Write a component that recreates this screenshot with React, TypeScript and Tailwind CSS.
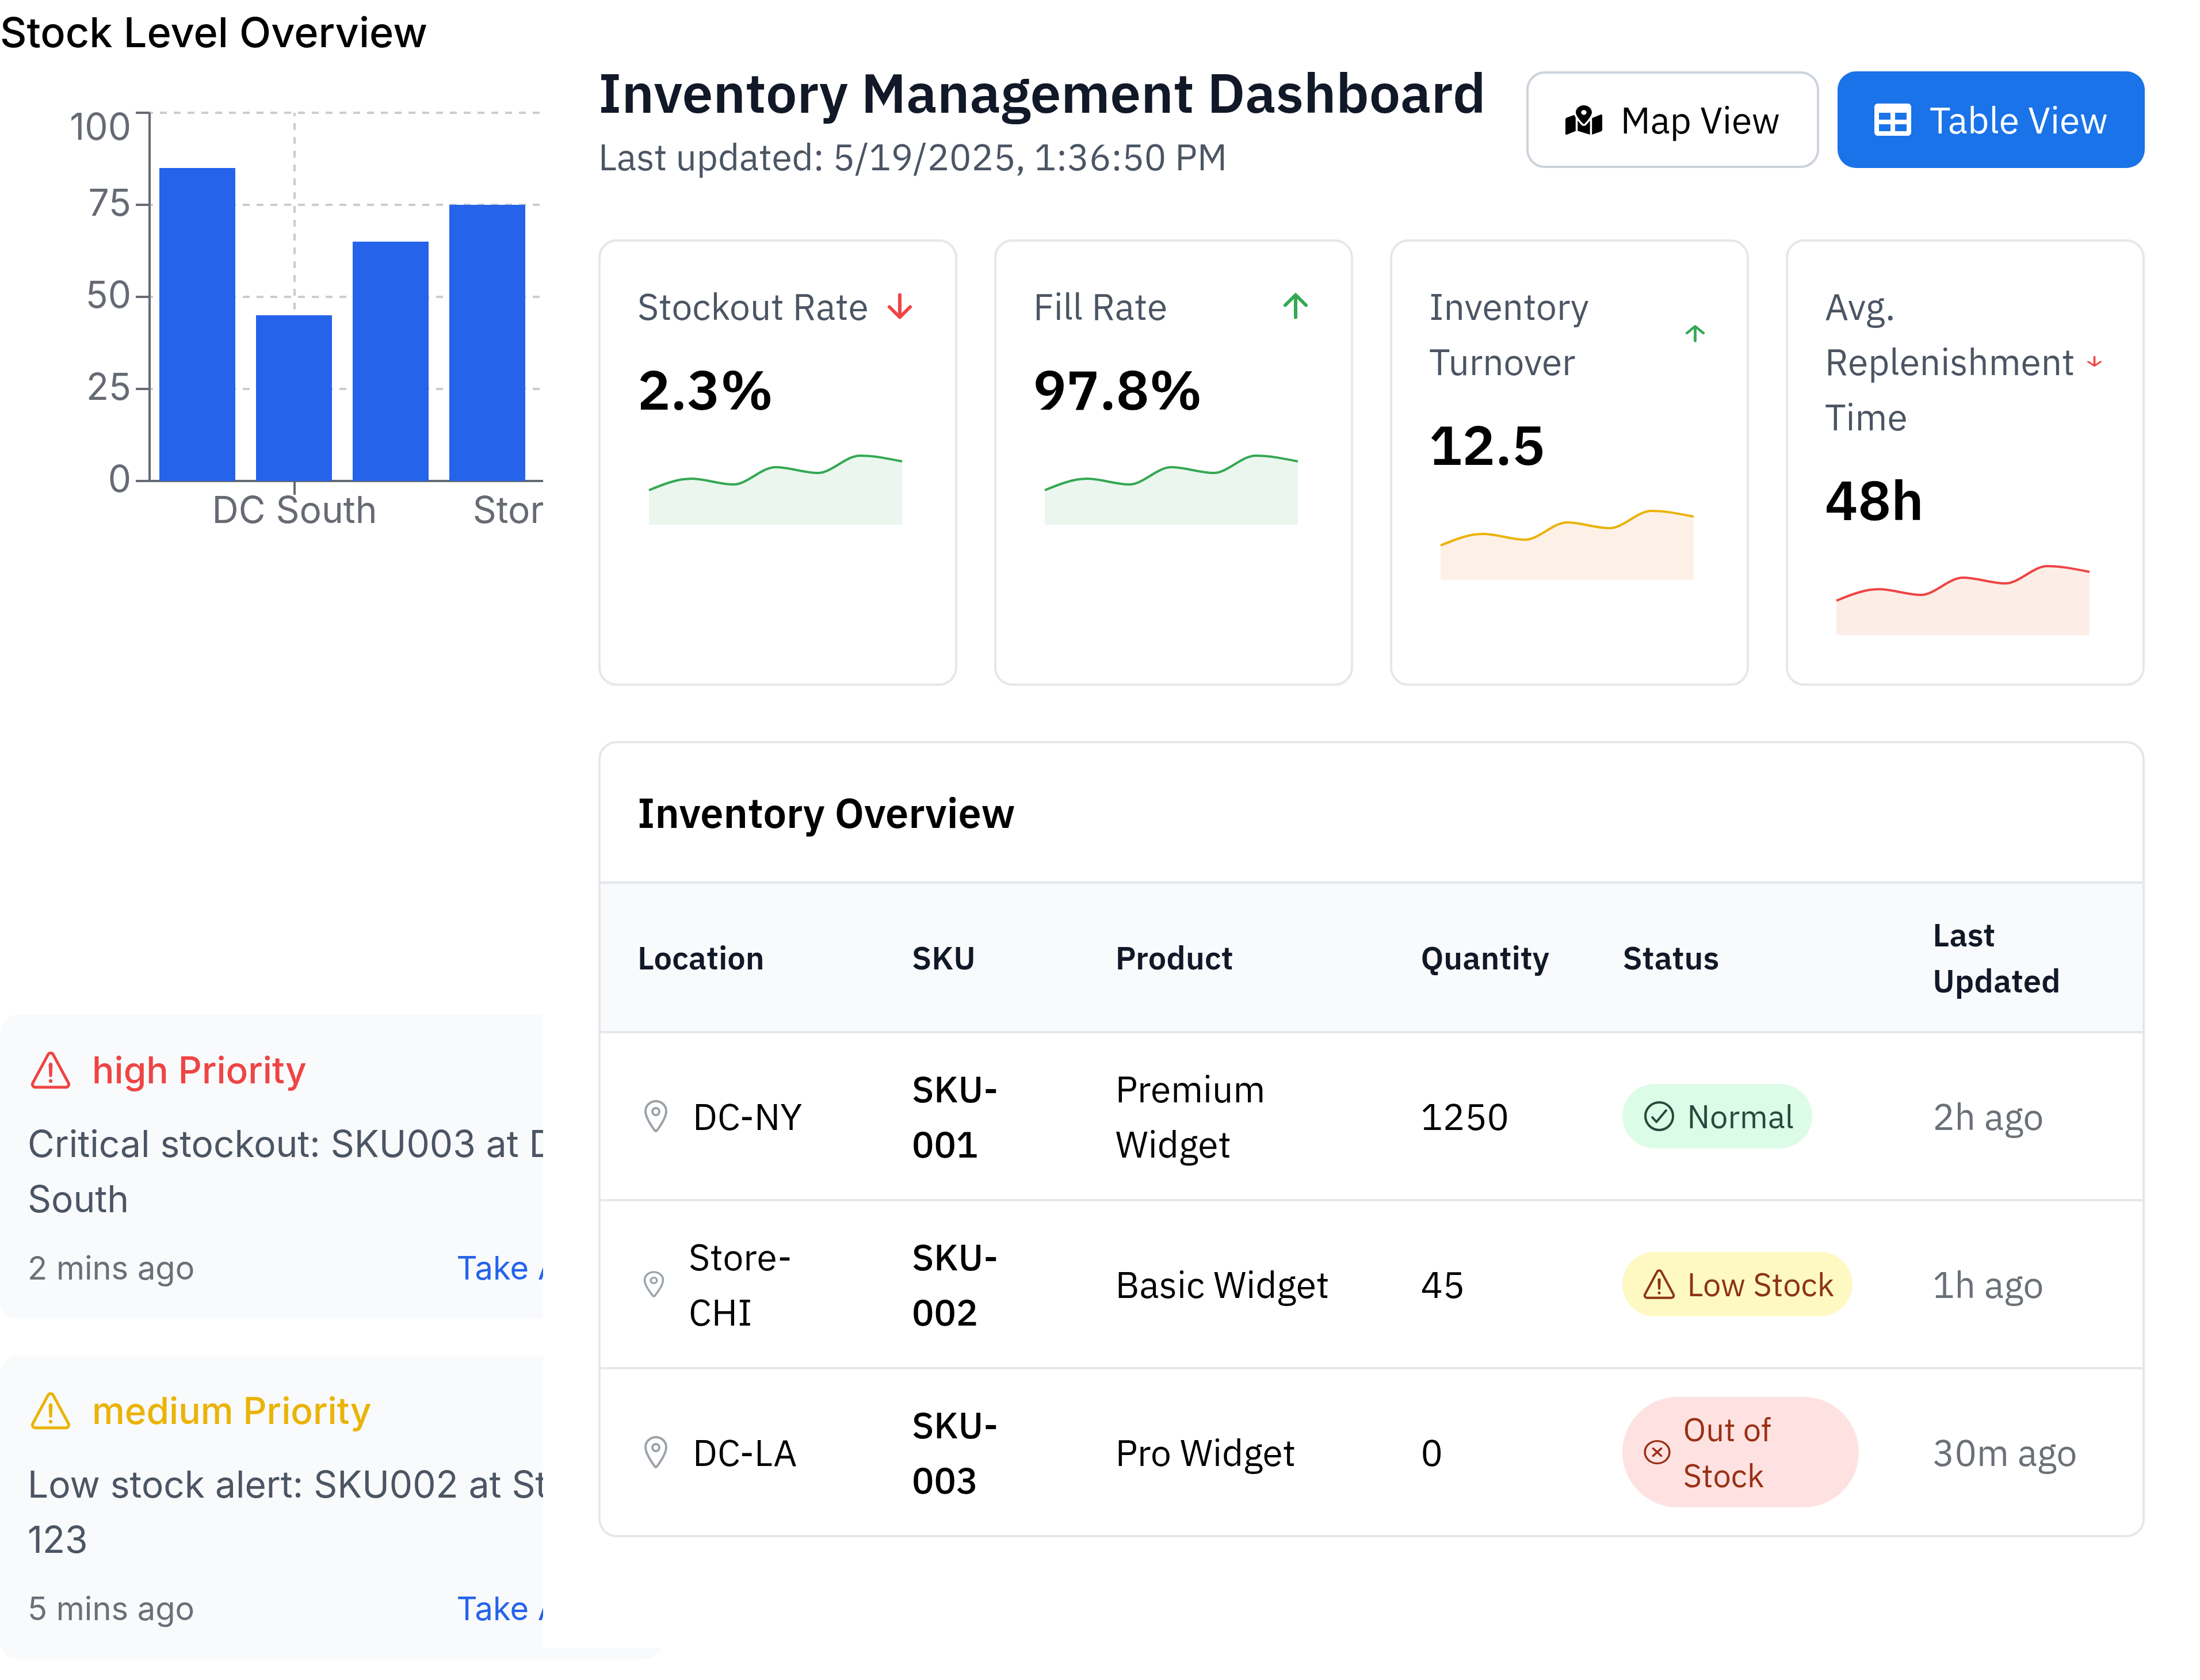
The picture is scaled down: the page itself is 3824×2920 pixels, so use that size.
import React from "react";
import { FaMapMarkedAlt, FaTable } from "react-icons/fa";
import {
  IoArrowDown,
  IoArrowUp,
  IoCheckmarkCircleOutline,
  IoCloseCircleOutline,
  IoLocationOutline,
  IoWarningOutline,
} from "react-icons/io5";

/* ---------- Stock level bar chart ---------- */

const STOCK = [
  { name: "DC North", value: 85 },
  { name: "DC South", value: 45 },
  { name: "DC East", value: 65 },
  { name: "DC West", value: 75 },
  { name: "Store Boston", value: 80 },
];

const PLOT = { left: 260, top: 20, width: 840, height: 640 };
const BASE = PLOT.top + PLOT.height;
const STEP = PLOT.width / STOCK.length;
const yOf = (v: number) => BASE - (v / 100) * PLOT.height;
const xOf = (i: number) => PLOT.left + STEP * (i + 0.5);

function StockChart() {
  return (
    <svg
      viewBox="0 0 1120 800"
      className="block h-[800px] w-[1120px]"
      role="img"
      aria-label="Stock level by location"
    >
      <g stroke="#cccccc" strokeWidth="4" strokeDasharray="12 12" strokeDashoffset="6">
        {[25, 50, 75, 100].map((v) => (
          <line key={v} x1={PLOT.left} x2={PLOT.left + PLOT.width} y1={yOf(v)} y2={yOf(v)} />
        ))}
        {[1, 4].map((i) => (
          <line key={i} x1={xOf(i)} x2={xOf(i)} y1={PLOT.top} y2={BASE} />
        ))}
      </g>
      <g stroke="#666a73" strokeWidth="4">
        <line x1={PLOT.left} x2={PLOT.left + PLOT.width} y1={BASE} y2={BASE} />
        <line x1={PLOT.left} x2={PLOT.left} y1={PLOT.top} y2={BASE} />
        {[0, 25, 50, 75, 100].map((v) => (
          <line key={v} x1={PLOT.left - 24} x2={PLOT.left} y1={yOf(v)} y2={yOf(v)} />
        ))}
        {[1, 4].map((i) => (
          <line key={i} x1={xOf(i)} x2={xOf(i)} y1={BASE} y2={BASE + 24} />
        ))}
      </g>
      <g fill="#2563eb">
        {STOCK.map((d, i) => (
          <rect
            key={d.name}
            x={PLOT.left + STEP * i + 17}
            y={yOf(d.value)}
            width="132"
            height={BASE - yOf(d.value)}
          />
        ))}
      </g>
      <g fill="#666a73" fontSize="64">
        {[0, 25, 50, 75, 100].map((v) => (
          <text key={v} x={PLOT.left - 32} y={yOf(v) + (v === 100 ? 47 : 19)} textAnchor="end">
            {v}
          </text>
        ))}
        {[1, 4].map((i) => (
          <text key={i} x={xOf(i)} y={BASE + 73} textAnchor="middle">
            {STOCK[i].name}
          </text>
        ))}
      </g>
    </svg>
  );
}

/* ---------- Alerts ---------- */

const ALERTS = [
  {
    level: "high",
    color: "text-[#ef4444]",
    message: "Critical stockout: SKU003 at DC South",
    time: "2 mins ago",
  },
  {
    level: "medium",
    color: "text-[#eab308]",
    message: "Low stock alert: SKU002 at Store 123",
    time: "5 mins ago",
  },
];

function AlertCard({ alert }: { alert: (typeof ALERTS)[number] }) {
  return (
    <article className="rounded-[32px] bg-[#f9fafc] p-12">
      <h3 className={`flex items-center gap-8 text-[64px] leading-24 font-medium ${alert.color}`}>
        <IoWarningOutline className="size-20 shrink-0" />
        {alert.level} Priority
      </h3>
      <p className="mt-8 text-[64px] leading-24 text-[#4b5563]">{alert.message}</p>
      <div className="mt-8 flex items-center justify-between text-[56px] leading-20">
        <span className="text-[#6b7078]">{alert.time}</span>
        <button type="button" className="text-[#2563eb]">
          Take Action
        </button>
      </div>
    </article>
  );
}

/* ---------- Metric cards ---------- */

const TREND = [30, 40, 35, 50, 45, 60, 55];
const DX = 440 / 6;

/* Monotone cubic curve through evenly spaced points. */
function trendPath() {
  const pts = TREND.map((v, i) => [20 + i * DX, 140 - v * 2]);
  const n = pts.length;
  const slope = (i: number) => (pts[i + 1][1] - pts[i][1]) / DX;
  const tangents = pts.map((_, i) => {
    if (i === 0 || i === n - 1) return 0;
    const a = slope(i - 1);
    const b = slope(i);
    return a * b <= 0 ? 0 : (Math.sign(a) + Math.sign(b)) * Math.min(Math.abs(a), Math.abs(b), Math.abs(a + b) / 4);
  });
  tangents[0] = (3 * slope(0) - tangents[1]) / 2;
  tangents[n - 1] = (3 * slope(n - 2) - tangents[n - 2]) / 2;
  let d = `M${pts[0][0]},${pts[0][1]}`;
  for (let i = 0; i < n - 1; i++) {
    const [x0, y0] = pts[i];
    const [x1, y1] = pts[i + 1];
    d += `C${x0 + DX / 3},${y0 + (tangents[i] * DX) / 3} ${x1 - DX / 3},${y1 - (tangents[i + 1] * DX) / 3} ${x1},${y1}`;
  }
  return d;
}

const TREND_LINE = trendPath();

const METRICS = [
  { label: "Stockout Rate", value: "2.3%", up: false, icon: "h-16 w-16", stroke: "#34a853", fill: "#eaf6ee" },
  { label: "Fill Rate", value: "97.8%", up: true, icon: "h-16 w-16", stroke: "#34a853", fill: "#eaf6ee" },
  { label: "Inventory Turnover", value: "12.5", up: true, icon: "h-[42px] w-[51px]", stroke: "#eab308", fill: "#fdf1e7" },
  { label: "Avg. Replenishment Time", value: "48h", up: false, icon: "h-[26px] w-[39px]", stroke: "#ef4444", fill: "#fdede7" },
];

function MetricCard({ metric }: { metric: (typeof METRICS)[number] }) {
  const Arrow = metric.up ? IoArrowUp : IoArrowDown;
  return (
    <article className="rounded-[32px] border-4 border-[#e5e7eb] p-16">
      <div className="flex items-center justify-between">
        <h3 className="text-[64px] leading-24 text-[#4b5563]">{metric.label}</h3>
        <Arrow
          preserveAspectRatio="none"
          className={`shrink-0 ${metric.icon} ${metric.up ? "text-[#34a853]" : "text-[#ef4444]"}`}
        />
      </div>
      <p className="mt-8 text-[96px] leading-32 font-semibold">{metric.value}</p>
      <svg viewBox="0 0 480 160" className="mt-8 block h-40 w-[480px]" role="img" aria-label={`${metric.label} trend`}>
        <path d={`${TREND_LINE}L460,140L20,140Z`} fill={metric.fill} />
        <path d={TREND_LINE} fill="none" stroke={metric.stroke} strokeWidth="4" />
      </svg>
    </article>
  );
}

/* ---------- Inventory table ---------- */

const BADGES = {
  Normal: { Icon: IoCheckmarkCircleOutline, icon: "h-16 w-16", style: "bg-[#dcfce7] text-[#264a3c]" },
  "Low Stock": { Icon: IoWarningOutline, icon: "h-16 w-16", style: "bg-[#fef9c3] text-[#8d3513]" },
  "Out of Stock": { Icon: IoCloseCircleOutline, icon: "h-[52px] w-[57px]", style: "bg-[#fee2e2] text-[#9a3015]" },
};

const ROWS: {
  location: string;
  pin: string;
  sku: string;
  product: string;
  quantity: number;
  status: keyof typeof BADGES;
  updated: string;
}[] = [
  { location: "DC-NY", pin: "h-16 w-16", sku: "SKU-001", product: "Premium Widget", quantity: 1250, status: "Normal", updated: "2h ago" },
  { location: "Store-CHI", pin: "h-[52px] w-[57px]", sku: "SKU-002", product: "Basic Widget", quantity: 45, status: "Low Stock", updated: "1h ago" },
  { location: "DC-LA", pin: "h-16 w-16", sku: "SKU-003", product: "Pro Widget", quantity: 0, status: "Out of Stock", updated: "30m ago" },
];

function StatusBadge({ status }: { status: keyof typeof BADGES }) {
  const { Icon, icon, style } = BADGES[status];
  return (
    <span className={`flex w-fit items-center gap-4 rounded-full px-8 py-4 text-[56px] leading-20 ${style}`}>
      <Icon preserveAspectRatio="none" className={`shrink-0 ${icon}`} />
      {status}
    </span>
  );
}

function InventoryTable() {
  return (
    <section className="mt-24 overflow-hidden rounded-[32px] border-4 border-[#e5e7eb]">
      <h2 className="border-b-4 border-[#e5e7eb] p-16 text-[72px] leading-28 font-semibold">Inventory Overview</h2>
      <table className="w-full table-fixed border-collapse text-left text-[64px] leading-24">
        <colgroup>
          <col className="w-[17.8%]" />
          <col className="w-[13.2%]" />
          <col className="w-[19.8%]" />
          <col className="w-[13.1%]" />
          <col className="w-[20.1%]" />
          <col />
        </colgroup>
        <thead>
          <tr className="border-b-4 border-[#e5e7eb] bg-[#f9fafc] text-[56px] leading-20 text-[#111827]">
            {["Location", "SKU", "Product", "Quantity", "Status", "Last Updated"].map((h) => (
              <th key={h} scope="col" className="px-16 py-12 font-semibold">
                {h}
              </th>
            ))}
          </tr>
        </thead>
        <tbody>
          {ROWS.map((r) => (
            <tr key={r.sku} className="border-b-4 border-[#e5e7eb] last:border-b-0">
              <td className="px-16 py-12">
                <div className="flex items-center gap-8">
                  <IoLocationOutline preserveAspectRatio="none" className={`shrink-0 text-[#9ba3aa] ${r.pin}`} />
                  {r.location}
                </div>
              </td>
              <td className="px-16 py-12 font-medium">{r.sku}</td>
              <td className="px-16 py-12">{r.product}</td>
              <td className="px-16 py-12">{r.quantity}</td>
              <td className="px-16 py-12">
                <StatusBadge status={r.status} />
              </td>
              <td className="px-16 py-12 text-[#6b7078]">{r.updated}</td>
            </tr>
          ))}
        </tbody>
      </table>
    </section>
  );
}

/* ---------- Page ---------- */

export default function App() {
  return (
    <div className="flex items-start overflow-x-hidden bg-white text-black">
      <aside className="w-[944px] shrink-0 font-['Inter',sans-serif]">
        <div className="w-[1152px]">
          <h2 className="mb-16 text-[72px] leading-28 font-medium">Stock Level Overview</h2>
          <StockChart />
          <div className="mt-[788px] flex flex-col gap-16">
            {ALERTS.map((a) => (
              <AlertCard key={a.level} alert={a} />
            ))}
          </div>
        </div>
      </aside>

      <main className="relative z-10 min-w-0 flex-1 bg-white px-24 pt-24 pb-48 font-['IBM_Plex_Sans','Inter',sans-serif]">
        <header className="flex items-center justify-between">
          <div>
            <h1 className="text-[96px] leading-32 font-semibold text-[#111827]">Inventory Management Dashboard</h1>
            <p className="text-[64px] leading-24 text-[#4b5563]">Last updated: 5/19/2025, 1:36:50 PM</p>
          </div>
          <div className="flex gap-8 text-[64px] leading-24">
            <button
              type="button"
              className="flex items-center gap-8 rounded-[32px] border-4 border-[#ccd4dc] px-16 py-8"
            >
              <FaMapMarkedAlt preserveAspectRatio="none" className="h-[51px] w-16 shrink-0" />
              Map View
            </button>
            <button
              type="button"
              className="flex items-center gap-8 rounded-[32px] bg-[#1a73e8] px-16 py-8 text-white"
            >
              <FaTable className="size-16 shrink-0" />
              Table View
            </button>
          </div>
        </header>

        <section className="mt-24 grid grid-cols-4 gap-16" aria-label="Key metrics">
          {METRICS.map((m) => (
            <MetricCard key={m.label} metric={m} />
          ))}
        </section>

        <InventoryTable />
      </main>
    </div>
  );
}
